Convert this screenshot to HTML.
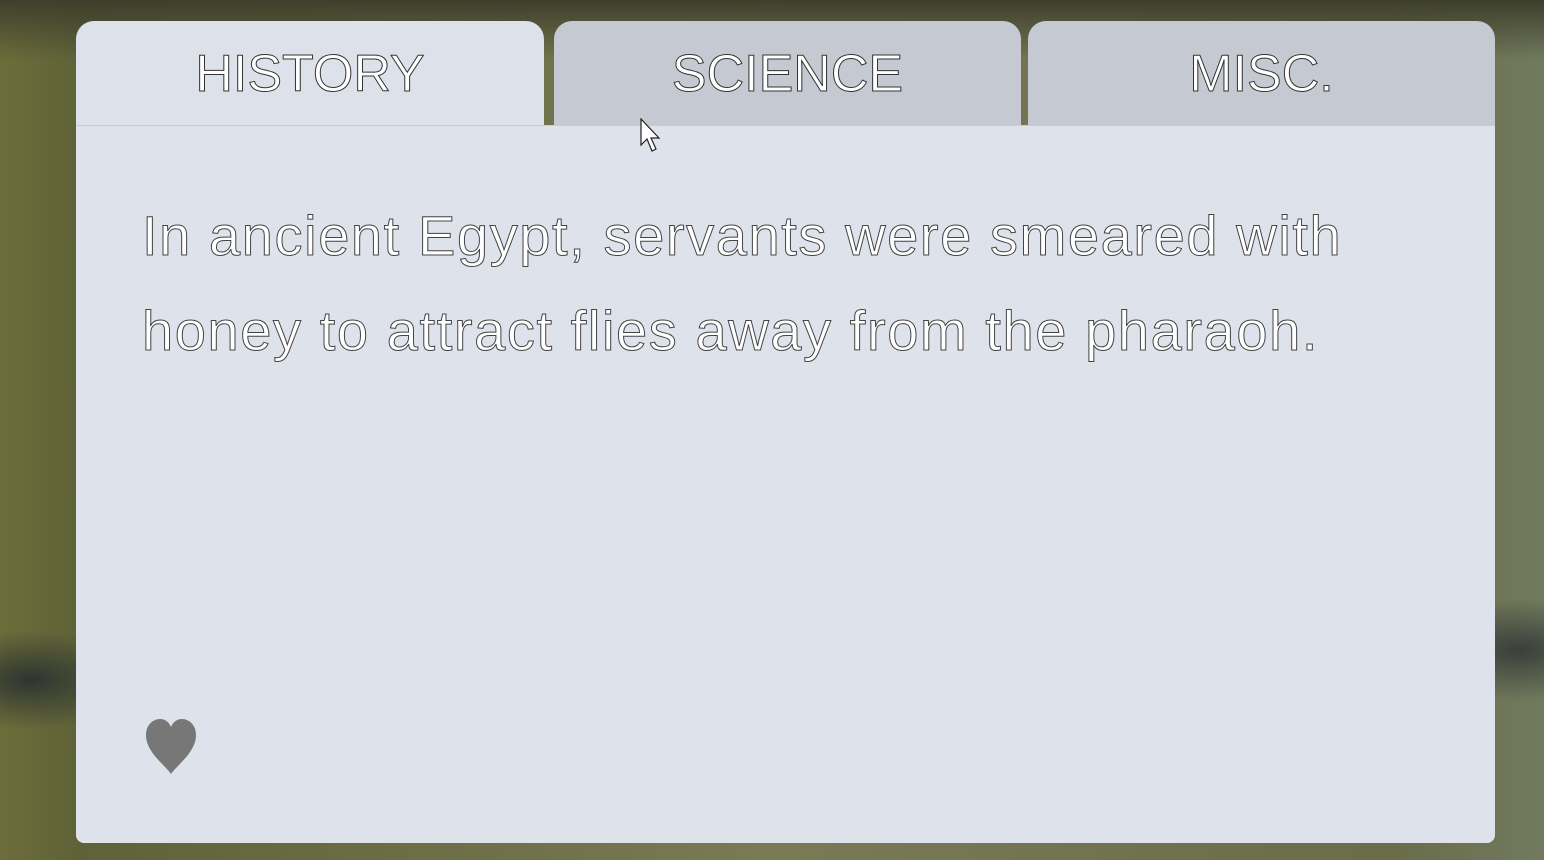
<!DOCTYPE html>
<html><head><meta charset="utf-8"><style>
html,body{margin:0;width:1544px;height:860px;overflow:hidden}
body{background:linear-gradient(90deg,#6d6d3a 0%,#5f6238 5%,#7a7a55 50%,#6a6c4a 90%,#717a5e 100%);position:relative;font-family:"Liberation Sans",sans-serif}
.bg2{position:absolute;left:0;top:0;width:1544px;height:860px;background:radial-gradient(ellipse at 1520px 650px,#3a3f3a 0,transparent 120px),radial-gradient(ellipse at 30px 680px,#2e3530 0,transparent 110px),linear-gradient(180deg,#3d3f2c 0,transparent 60px)}
.tab{position:absolute;top:21px;height:104px;border-radius:18px 18px 0 0;text-align:center;font-size:52px;line-height:106px;color:#fff;-webkit-text-stroke:1px #333;letter-spacing:0}
.t1{left:76px;width:468px;background:#dde2ea}
.t2{left:554px;width:467px;background:#c5cad2}
.t3{left:1028px;width:467px;background:#c5cad2}
.panel{position:absolute;left:76px;top:125px;width:1419px;height:718px;background:#dee3eb;border-radius:0 0 8px 8px;border-top:1px solid #c8ccd3;box-sizing:border-box}
.txt{position:absolute;left:66px;top:62px;width:1310px;font-size:56px;line-height:95px;color:#fff;-webkit-text-stroke:1px #444;letter-spacing:1.6px}
.heart{position:absolute;left:68px;top:592px}
</style></head><body>
<div class="bg2"></div>
<div class="tab t1">HISTORY</div>
<div class="tab t2">SCIENCE</div>
<div class="tab t3">MISC.</div>
<div class="panel">
<div class="txt">In ancient Egypt, servants were smeared with<br>honey to attract flies away from the pharaoh.</div>
<svg class="heart" width="54" height="56" viewBox="0 0 54 56"><path d="M27 56 C20 46 2 34 2 17 C2 7 9 1 16 1 C21 1 25 4 27 9 C29 4 33 1 38 1 C45 1 52 7 52 17 C52 34 34 46 27 56Z" fill="#777"/></svg>
</div>
<svg style="position:absolute;left:640px;top:118px" width="24" height="38" viewBox="0 0 24 38"><path d="M1 1 L1 27 L7 21 L12 33 L16 31 L11 20 L19 20 Z" fill="#fff" stroke="#222" stroke-width="1.2"/></svg>
</body></html>
